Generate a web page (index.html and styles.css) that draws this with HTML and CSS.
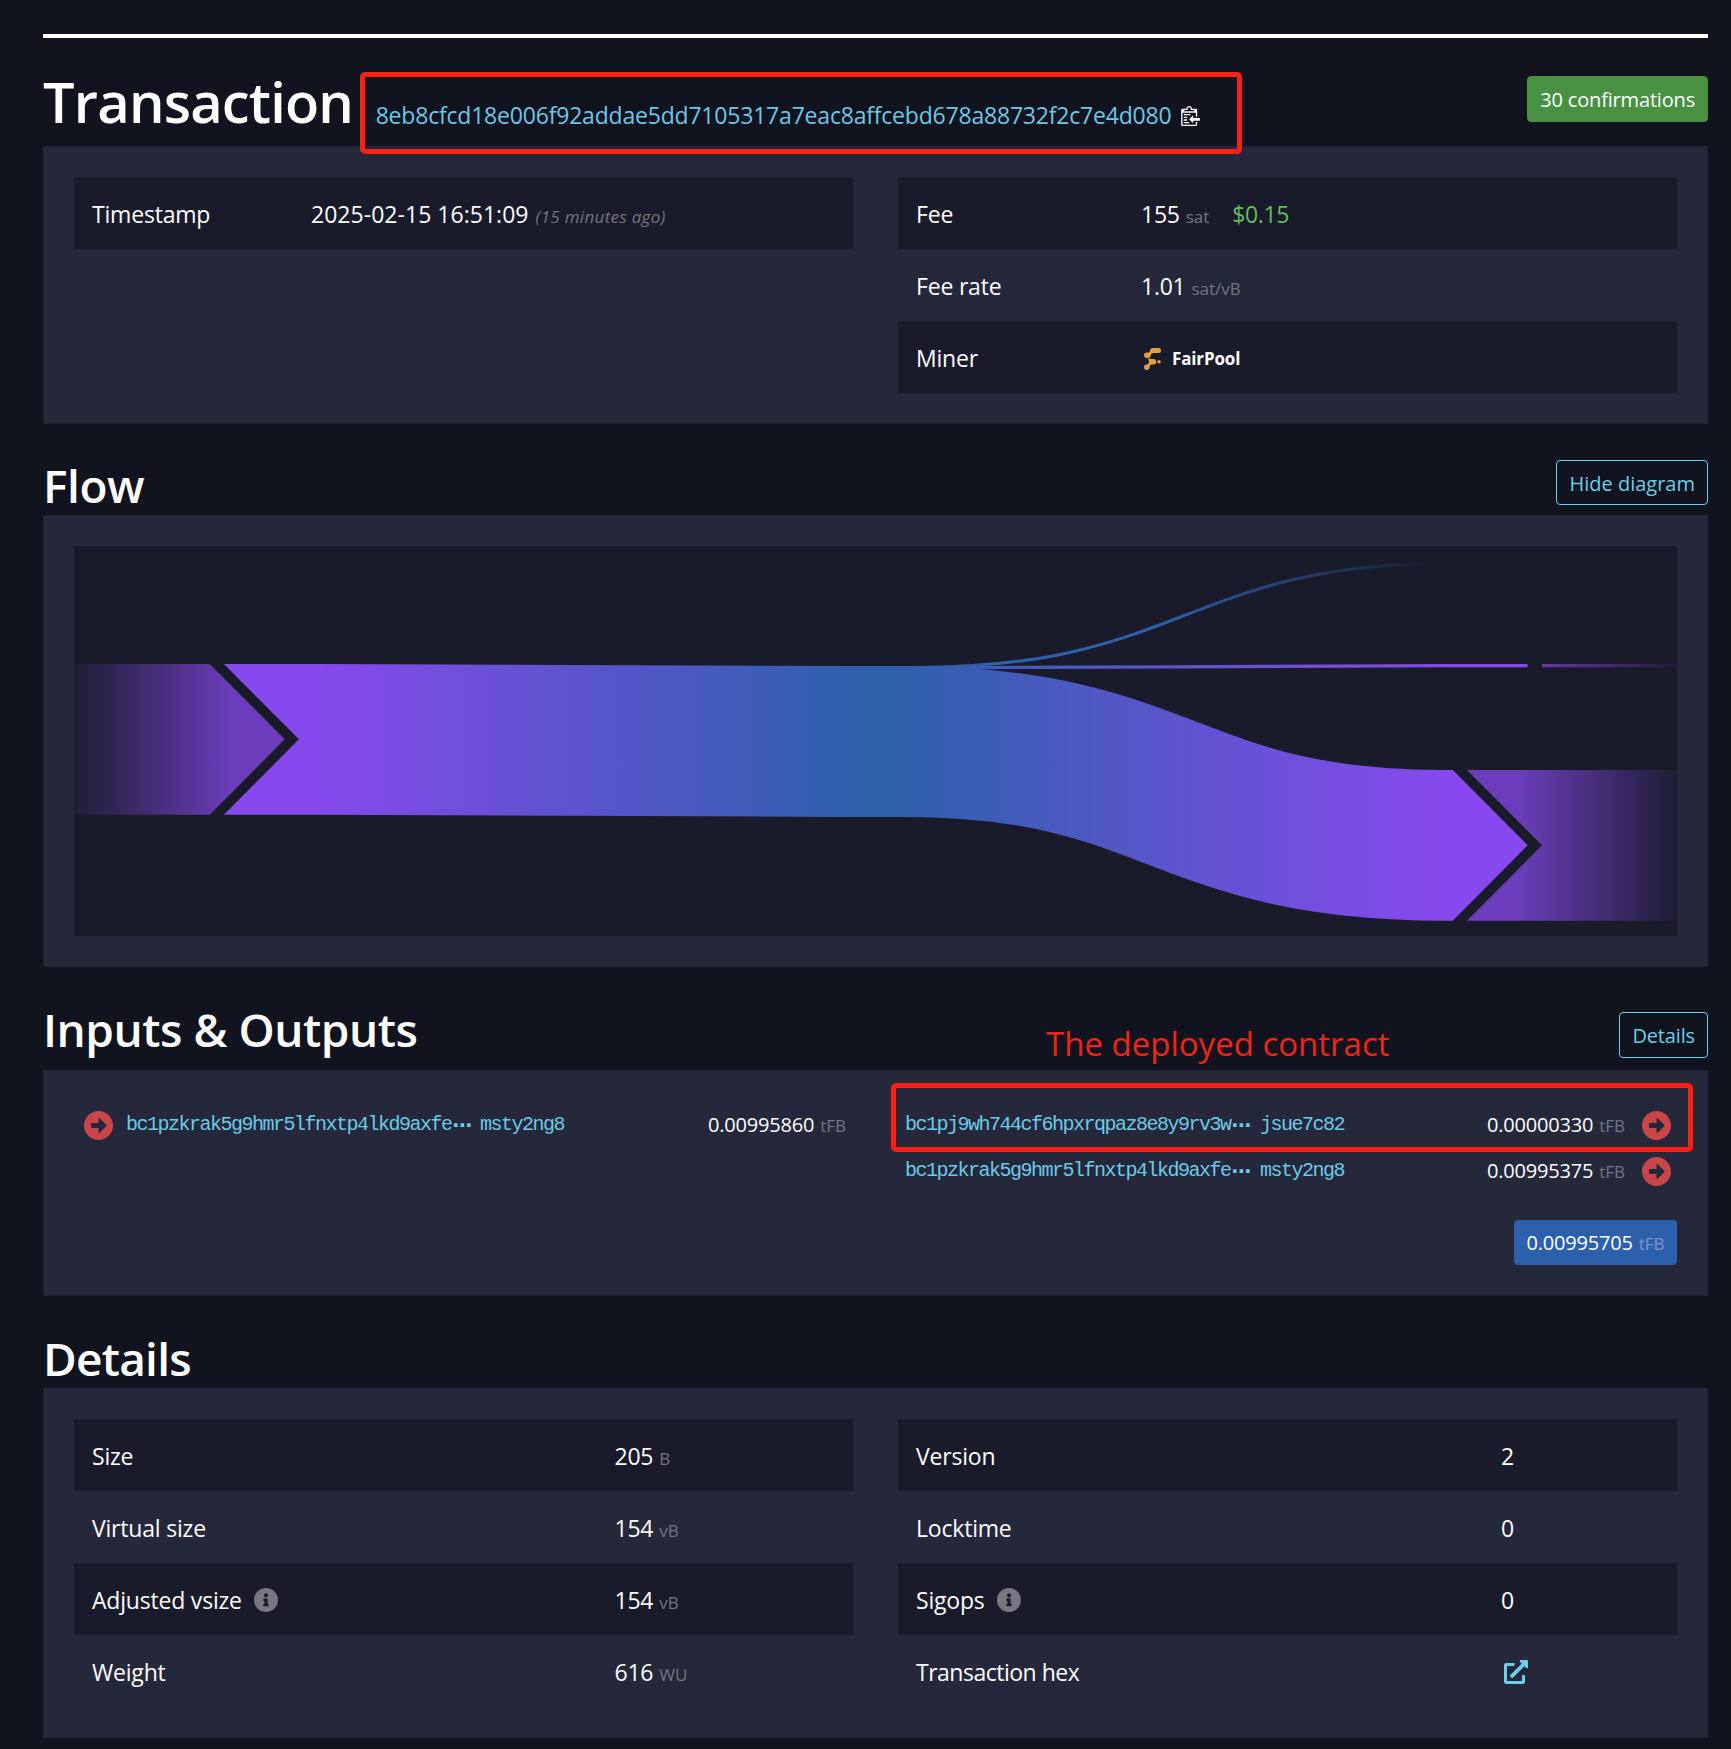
FILE: index.html
```html
<!DOCTYPE html>
<html lang="en">
<head>
<meta charset="utf-8">
<title>Transaction</title>
<link rel="stylesheet" href="styles.css">
</head>
<body>
<svg class="defs" width="0" height="0" aria-hidden="true">
  <symbol id="arrow" viewBox="8 8 496 496"><path d="M256 8c137 0 248 111 248 248S393 504 256 504 8 393 8 256 119 8 256 8zM140 300h116v70.9c0 10.7 13 16.1 20.5 8.5l114.3-114.9c4.7-4.7 4.7-12.2 0-16.9l-114.3-115c-7.6-7.6-20.5-2.2-20.5 8.5V212H140c-6.6 0-12 5.4-12 12v64c0 6.6 5.4 12 12 12z"/></symbol>
  <symbol id="info" viewBox="8 8 496 496"><path d="M256 8C119.043 8 8 119.083 8 256c0 136.997 111.043 248 248 248s248-111.003 248-248C504 119.083 392.957 8 256 8zm0 110c23.196 0 42 18.804 42 42s-18.804 42-42 42-42-18.804-42-42 18.804-42 42-42zm56 254c0 6.627-5.373 12-12 12h-88c-6.627 0-12-5.373-12-12v-24c0-6.627 5.373-12 12-12h12v-64h-12c-6.627 0-12-5.373-12-12v-24c0-6.627 5.373-12 12-12h64c6.627 0 12 5.373 12 12v100h12c6.627 0 12 5.373 12 12v24z"/></symbol>
</svg>
<main class="page">
  <header class="title title-main">
    <h1>Transaction</h1>
    <div class="txid">
      <a class="hash">8eb8cfcd18e006f92addae5dd7105317a7eac8affcebd678a88732f2c7e4d080</a>
      <svg class="clippy" viewBox="0 1 14 15"><path d="M2 13h4v1H2v-1zm5-6H2v1h5V7zm2 3V8l-3 3 3 3v-2h5v-2H9zM4.5 9H2v1h2.5V9zM2 12h2.5v-1H2v1zm9 1h1v2c-.02.28-.11.52-.3.7-.19.18-.42.28-.7.3H1c-.55 0-1-.45-1-1V4c0-.55.45-1 1-1h3c0-1.11.89-2 2-2 1.11 0 2 .89 2 2h3c.55 0 1 .45 1 1v5h-1V6H1v9h10v-2zM2 5h8c0-.55-.45-1-1-1H8c-.55 0-1-.45-1-1s-.45-1-1-1-1 .45-1 1-.45 1-1 1H3c-.55 0-1 .45-1 1z"/></svg>
    </div>
    <span class="btn confirmed">30 confirmations</span>
    <div class="mark mark-hash"></div>
  </header>

  <section class="box columns">
    <div class="table">
      <div class="row"><span class="label stamp">Timestamp</span><span class="digits date">2025-02-15 16:51:09</span><i class="ago">(15 minutes ago)</i></div>
    </div>
    <div class="table">
      <div class="row"><span class="label fee">Fee</span><span class="digits">155</span><span class="unit">sat</span><span class="fiat digits">$0.15</span></div>
      <div class="row"><span class="label fee">Fee rate</span><span class="digits">1.01</span><span class="unit">sat/vB</span></div>
      <div class="row"><span class="label fee">Miner</span>
        <svg class="pool" viewBox="0 0 17 22"><path d="M8.500 0H14.500a2.500 2.500 0 0 1 0 5H9Q7 5 6.800 7Q6.500 10 4 10H2.700a2.700 2.700 0 0 1 0-5.400H4.500Q6 4.400 6 2.500Q6.200 0 8.500 0zM4 10Q5.500 11 7.500 11H9.500a2.700 2.700 0 0 1 0 5.400H7.500Q5.600 16.600 5.600 19A2.800 2.800 0 1 1 2.600 16.400Q5 16.400 5 14z"/><circle cx="15" cy="13.700" r="1.800"/></svg>
        <b class="miner">FairPool</b></div>
    </div>
  </section>

  <header class="title title-flow">
    <h2>Flow</h2>
    <a class="btn outline">Hide diagram</a>
  </header>

  <section class="box">
    <svg class="diagram" viewBox="0 0 1603 390">
      <defs>
        <linearGradient id="band" gradientUnits="userSpaceOnUse" x1="0" x2="1603" y1="0" y2="0">
          <stop offset=".15" stop-color="#8749ed"/><stop offset=".49" stop-color="#2d60ab"/><stop offset=".51" stop-color="#2d60ab"/><stop offset=".85" stop-color="#8749ed"/>
        </linearGradient>
        <linearGradient id="in" gradientUnits="userSpaceOnUse" x1="0" x2="160" y1="0" y2="0">
          <stop offset="0" stop-color="#8749ed" stop-opacity=".05"/><stop offset="1" stop-color="#8749ed" stop-opacity=".75"/>
        </linearGradient>
        <linearGradient id="out" gradientUnits="userSpaceOnUse" x1="1443" x2="1603" y1="0" y2="0">
          <stop offset="0" stop-color="#8749ed" stop-opacity=".75"/><stop offset="1" stop-color="#8749ed" stop-opacity=".05"/>
        </linearGradient>
        <linearGradient id="feeline" gradientUnits="userSpaceOnUse" x1="801" x2="1360" y1="0" y2="0">
          <stop offset="0" stop-color="#2d60ab"/><stop offset=".5" stop-color="#2d60ab"/><stop offset="1" stop-color="#2d60ab" stop-opacity="0"/>
        </linearGradient>
        <clipPath id="chevrons"><path d="M149.900 0V118L224.900 193.300L149.900 268.700V390H1378.800V374.700L1453.700 299.300L1378.800 223.900V0z"/></clipPath>
      </defs>
      <path fill="url(#in)" d="M0 118H135.700L210.700 193.300L135.700 268.700H0z"/>
      <path clip-path="url(#chevrons)" fill="none" stroke="url(#band)" stroke-width="150.800" d="M149 193.300H241C500 193.300 500 195.500 760 195.500H829C1099 195.500 1099 299.300 1369 299.300H1455"/>
      <path fill="none" stroke="url(#feeline)" stroke-width="3" d="M801 121.500H841C1111 121.500 1111 17 1381 17H1410"/>
      <path fill="none" stroke="url(#band)" stroke-width="3.200" d="M801 121.800H860C1110 121.800 1110 119.700 1380 119.700H1453.500"/>
      <path fill="url(#out)" d="M1393 223.900H1603V374.700H1393L1468 299.300z"/>
      <path fill="url(#out)" d="M1468 118.100H1603V121.300H1468z"/>
    </svg>
  </section>

  <header class="title title-io">
    <h2>Inputs &amp; Outputs</h2>
    <a class="btn outline">Details</a>
    <div class="note">The deployed contract</div>
  </header>

  <section class="box io">
    <div class="mark mark-output"></div>
    <div class="side">
      <div class="tx"><svg class="dir"><use href="#arrow"/></svg><a class="addr"><span>bc1pzkrak5g9hmr5lfnxtp4lkd9axfe</span><span class="dots">⋯</span><span class="tail">msty2ng8</span></a><span class="amount">0.00995860</span><span class="sym">tFB</span></div>
    </div>
    <div class="side outputs">
      <div class="tx"><a class="addr"><span>bc1pj9wh744cf6hpxrqpaz8e8y9rv3w</span><span class="dots">⋯</span><span class="tail">jsue7c82</span></a><span class="amount">0.00000330</span><span class="sym">tFB</span><svg class="dir"><use href="#arrow"/></svg></div>
      <div class="tx"><a class="addr"><span>bc1pzkrak5g9hmr5lfnxtp4lkd9axfe</span><span class="dots">⋯</span><span class="tail">msty2ng8</span></a><span class="amount">0.00995375</span><span class="sym">tFB</span><svg class="dir"><use href="#arrow"/></svg></div>
      <div class="total"><span class="sum">0.00995705</span><span class="sym">tFB</span></div>
    </div>
  </section>

  <header class="title title-details">
    <h2>Details</h2>
  </header>

  <section class="box columns">
    <div class="table">
      <div class="row"><span class="label wide">Size</span><span class="digits">205</span><span class="unit">B</span></div>
      <div class="row"><span class="label wide">Virtual size</span><span class="digits">154</span><span class="unit">vB</span></div>
      <div class="row"><span class="label wide">Adjusted vsize<svg class="info"><use href="#info"/></svg></span><span class="digits">154</span><span class="unit">vB</span></div>
      <div class="row"><span class="label wide">Weight</span><span class="digits">616</span><span class="unit">WU</span></div>
    </div>
    <div class="table">
      <div class="row"><span class="label wider">Version</span><span class="digits">2</span></div>
      <div class="row"><span class="label wider">Locktime</span><span class="digits">0</span></div>
      <div class="row"><span class="label wider">Sigops<svg class="info"><use href="#info"/></svg></span><span class="digits">0</span></div>
      <div class="row"><span class="label wider tight">Transaction hex</span><svg class="external" viewBox="0 0 512 512"><path d="M432,320H400a16,16,0,0,0-16,16V448H64V128H208a16,16,0,0,0,16-16V80a16,16,0,0,0-16-16H48A48,48,0,0,0,0,112V464a48,48,0,0,0,48,48H400a48,48,0,0,0,48-48V336A16,16,0,0,0,432,320ZM488,0h-128c-21.37,0-32.05,25.91-17,41l35.73,35.73L135,320.37a24,24,0,0,0,0,34L157.67,377a24,24,0,0,0,34,0L435.28,133.32,471,169c15,15,41,4.5,41-17V24A24,24,0,0,0,488,0Z"/></svg></div>
    </div>
  </section>
</main>
</body>
</html>
```
FILE: styles.css
```css
* { box-sizing: border-box; }
body {
  margin: 0;
  background: #11131e;
  color: #fff;
  font: 23px/34px "Open Sans", "Noto Sans", sans-serif;
}
.defs { position: absolute; }
.page {
  height: 1749px;
  overflow: hidden;
  padding: 34px 23px 0 43px;
}
.title {
  position: relative;
  display: flex;
  justify-content: space-between;
  align-items: flex-start;
}
.title-main { height: 112px; border-top: 4px solid #fff; padding-top: 38px; }
.title-flow { height: 91px; padding-top: 36px; }
.title-io { height: 103px; padding-top: 45px; }
.title-details { height: 92px; padding-top: 45px; }
h1, h2 { margin: 0; font-weight: 600; white-space: nowrap; }
h1 { font-size: 56px; line-height: 56px; margin-top: -3px; letter-spacing: -.8px; }
h2 { font-size: 46px; line-height: 46px; margin-top: 2px; letter-spacing: -.45px; }
.title-details h2, .title-io h2 { margin-top: -6px; }
.title-details h2 { letter-spacing: -.75px; }
.txid {
  flex: 1;
  display: flex;
  align-items: center;
  gap: 10px;
  padding-left: 22.5px;
  margin-top: 22px;
}
.hash { color: #6cc9e6; letter-spacing: -.2px; }
.clippy { width: 19px; height: 20px; fill: #fff; margin-top: 1px; }
.btn {
  font-size: 20px;
  line-height: 44px;
  height: 46px;
  padding: 1px 12px 0;
  border: 1px solid transparent;
  border-radius: 4px;
  white-space: nowrap;
}
.confirmed { background: #489042; border-color: #489042; letter-spacing: -.18px; }
.outline { color: #6bcfe8; border-color: #6bcfe8; }
.title-flow .outline { height: 45px; }
.title-io .outline { letter-spacing: -.15px; }

.mark {
  position: absolute;
  z-index: 2;
  border: 5px solid #fb2014;
  border-radius: 5px;
}
.mark-hash { left: 317px; top: 34px; width: 882px; height: 82px; }
.mark-output { left: 847px; top: 12px; width: 802px; height: 69px; }
.note {
  position: absolute;
  left: 1003px;
  top: 54px;
  font-size: 33px;
  line-height: 46px;
  color: #ee2519;
  white-space: nowrap;
}

.box {
  position: relative;
  background: #25273b;
  border: 1px solid #212335;
  padding: 30px;
}
.columns { display: grid; grid-template-columns: 1fr 1fr; gap: 45px; }
.row {
  display: flex;
  align-items: baseline;
  height: 72px;
  padding: 20px 18px 0;
  white-space: nowrap;
}
.row:nth-child(odd) { background: #191b2a; }
.label { letter-spacing: -.2px; }
.tight { letter-spacing: -.5px; }
.digits { letter-spacing: -.25px; }
.date { letter-spacing: .03px; }
.stamp { width: 219px; }
.fee { width: 225px; }
.wide { width: 522.5px; }
.wider { width: 585px; }
.unit { font-size: 17px; color: #737581; margin-left: 6px; }
.ago { font-size: 17px; color: #737581; margin-left: 7px; letter-spacing: .3px; }
.fiat { color: #61bf5c; margin-left: 23px; letter-spacing: -.4px; }
.pool { width: 17px; height: 22px; fill: #e39f38; margin-left: 3px; align-self: flex-start; margin-top: 7px; }
.miner { font-size: 17px; margin-left: 11px; position: relative; top: -2px; letter-spacing: -.15px; }
.info { width: 24px; height: 24px; fill: #777782; margin-left: 12.5px; vertical-align: -3px; }
.external { width: 24px; height: 24px; fill: #6bcfe8; margin-left: 3px; align-self: flex-start; margin-top: 5px; }

.diagram { display: block; width: 1603px; height: 390px; background: #191b2a; }

.io { height: 226px; display: grid; grid-template-columns: 1fr 1fr; gap: 45px; }
.tx {
  display: flex;
  align-items: center;
  height: 46px;
  font-size: 20px;
  padding: 0 7px 0 10px;
}
.side { padding-top: 1px; }
.dir { width: 29px; height: 29px; fill: #c84648; }
.addr {
  display: flex;
  color: #6cc9e6;
  font: 20px/28px "Liberation Mono", monospace;
  letter-spacing: -1.5px;
  width: 438px;
  margin-left: 13px;
}
.dots { width: 22px; text-align: center; font-family: "DejaVu Sans", sans-serif; font-weight: bold; letter-spacing: 0; }
.tail { margin-left: auto; }
.amount { margin-left: auto; letter-spacing: -.2px; }
.sym { font-size: 17px; color: #737581; margin-left: 6px; padding-top: 2px; }
.outputs .addr { margin-left: -3px; width: 439px; }
.outputs .dir { margin-left: 17px; }
.outputs .tx { padding-right: 6px; }
.total {
  display: flex;
  justify-content: center;
  align-items: center;
  width: 163px;
  height: 45px;
  margin: 26px 0 0 auto;
  padding-top: 1px;
  border-radius: 4px;
  background: #2d60ac;
  font-size: 20px;
}
.sum { letter-spacing: -.2px; }
.total .sym { color: #7a97cb; }
```
